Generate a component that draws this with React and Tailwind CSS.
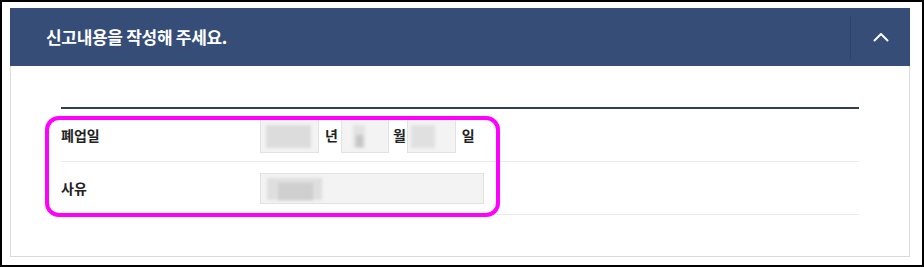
import React from "react";

const font = { fontFamily: '"Noto Sans CJK KR", "Noto Sans", sans-serif' };

// blurred placeholder that stands in for masked values
const Smudge = ({ className }) => (
  <div className={`absolute blur-[1.5px] ${className}`} />
);

const DateBox = ({ w, children }) => (
  <div className={`relative h-[35px] ${w} bg-[#f3f3f3] border border-[#e2e2e2]`}>
    {children}
  </div>
);

export default function App() {
  return (
    <div
      className="relative w-[924px] h-[267px] box-border border-2 border-black bg-white pt-[6px] pl-[8px]"
      style={font}
    >
      <section className="w-[900px]">
        {/* header */}
        <div className="flex items-center h-[58px] bg-[#354d77]">
          <h2 className="flex-1 pl-[36px] text-[17px] font-bold tracking-[-0.3px] text-white">
            신고내용을 작성해 주세요.
          </h2>
          <div className="w-px h-[43px] bg-[#2c4369]" />
          <button className="flex items-center justify-center w-[59px] h-full">
            <svg width="16" height="10" viewBox="0 0 16 10" fill="none">
              <polyline
                points="1.5,8.5 8,2 14.5,8.5"
                stroke="white"
                strokeWidth="2"
                strokeLinecap="round"
                strokeLinejoin="round"
              />
            </svg>
          </button>
        </div>

        {/* body */}
        <div className="border-x border-b border-[#dadada] px-[50px] pt-[41px] pb-[41px]">
          <div className="h-[2px] bg-[#2f3e52]" />

          <div className="flex items-center h-[53px] border-b border-[#ebebeb] text-[14px] font-bold text-[#222]">
            <div className="w-[199px]">폐업일</div>
            <DateBox w="w-[59px]">
              <Smudge className="left-[5px] top-[6px] w-[45px] h-[23px] bg-[#dcdcdc]" />
            </DateBox>
            <span className="ml-[6px] mr-[3px]">년</span>
            <DateBox w="w-[48px]">
              <Smudge className="left-[11px] top-[6px] w-[12px] h-[23px] bg-[#e2e2e2]" />
              <Smudge className="left-[14px] top-[16px] w-[7px] h-[12px] bg-[#c6c6c6]" />
            </DateBox>
            <span className="ml-[4px] mr-[1px]">월</span>
            <DateBox w="w-[49px]">
              <Smudge className="left-[3px] top-[6px] w-[24px] h-[23px] bg-[#e0e0e0]" />
            </DateBox>
            <span className="ml-[6px]">일</span>
          </div>

          <div className="flex items-center h-[53px] border-b border-[#ebebeb] text-[14px] font-bold text-[#222]">
            <div className="w-[199px]">사유</div>
            <div className="relative w-[224px] h-[31px] bg-[#f3f3f3] border border-[#e2e2e2]">
              <Smudge className="left-[6px] top-[4px] w-[55px] h-[22px] bg-[#dedede]" />
              <Smudge className="left-[17px] top-[9px] w-[35px] h-[17px] bg-[#cfcfcf]" />
            </div>
          </div>
        </div>
      </section>

      {/* highlight annotation */}
      <div className="absolute left-[43px] top-[114px] w-[455px] h-[101px] rounded-[14px] border-4 border-[#ff00ff]" />
    </div>
  );
}
